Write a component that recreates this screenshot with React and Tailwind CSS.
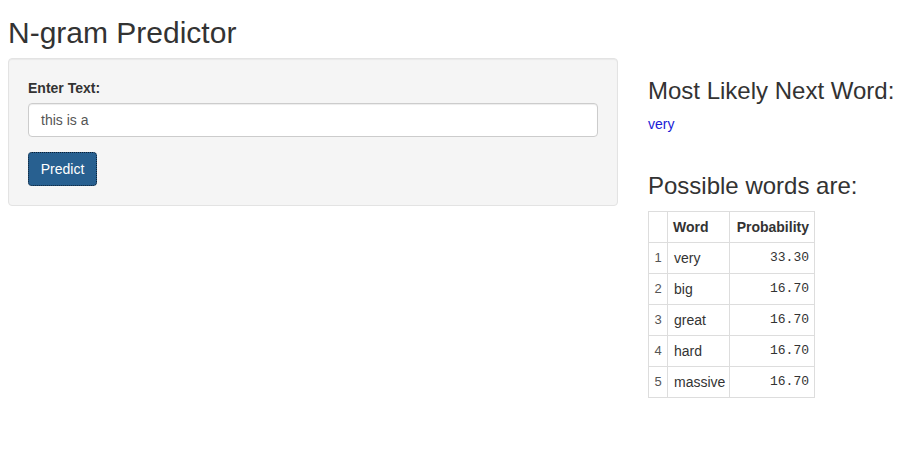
export default function App() {
  const rows = [
    ["1", "very", "33.30"],
    ["2", "big", "16.70"],
    ["3", "great", "16.70"],
    ["4", "hard", "16.70"],
    ["5", "massive", "16.70"],
  ];
  return (
    <div
      className="min-h-[459px] bg-white px-[8px] text-[14px] leading-[20px] text-[#333]"
      style={{ fontFamily: '"Liberation Sans", Arial, sans-serif' }}
    >
      <h2 className="pt-[16px] mb-[9px] text-[30px] leading-[33px] font-normal">
        N-gram Predictor
      </h2>
      <div className="flex gap-[30px]">
        <div className="w-[610px] shrink-0 self-start">
          <div className="rounded-[4px] border border-[#e3e3e3] bg-[#f5f5f5] p-[19px] shadow-[inset_0_1px_1px_rgba(0,0,0,0.05)]">
            <label className="mb-[5px] block font-bold">Enter Text:</label>
            <div className="mb-[15px] flex h-[34px] items-center rounded-[4px] border border-[#ccc] bg-white px-[12px] text-[#555] shadow-[inset_0_1px_1px_rgba(0,0,0,0.075)]">
              this is a
            </div>
            <button className="h-[34px] w-[69px] rounded-[4px] border border-dotted border-[#0b1f33] bg-[#286090] text-white">
              Predict
            </button>
          </div>
        </div>
        <div className="flex flex-col">
          <h3 className="mt-[20px] mb-[10px] text-[24px] leading-[26px] font-normal">
            Most Likely Next Word:
          </h3>
          <div className="text-[#1a1ad6]">very</div>
          <h3 className="mt-[39px] mb-[12px] text-[24px] leading-[26px] font-normal">
            Possible words are:
          </h3>
          <table className="w-[166px] table-fixed border-collapse">
            <colgroup>
              <col className="w-[19px]" />
              <col className="w-[62px]" />
              <col className="w-[85px]" />
            </colgroup>
            <thead>
              <tr className="h-[31px]">
                <th className="border border-[#ddd] p-0"></th>
                <th className="border border-[#ddd] px-[5px] text-left font-bold">Word</th>
                <th className="border border-[#ddd] px-[5px] text-right font-bold">Probability</th>
              </tr>
            </thead>
            <tbody>
              {rows.map((r) => (
                <tr key={r[0]} className="h-[31px]">
                  <td className="border border-[#ddd] px-0 text-center text-[13px] text-[#555]">{r[0]}</td>
                  <td className="border border-[#ddd] px-[5px] pl-[6px]">{r[1]}</td>
                  <td
                    className="border border-[#ddd] px-[5px] text-right text-[13px] text-[#333]"
                    style={{ fontFamily: '"Liberation Mono", "Courier New", monospace' }}
                  >
                    {r[2]}
                  </td>
                </tr>
              ))}
            </tbody>
          </table>
        </div>
      </div>
    </div>
  );
}
